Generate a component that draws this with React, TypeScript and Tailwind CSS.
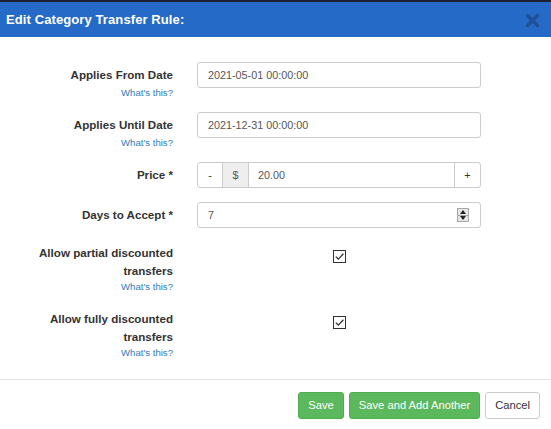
import { ReactNode } from 'react';

const Help = ({ className = '' }: { className?: string }) => (
    <div className={`text-[9.6px] leading-[12px] text-[#337ab7] ${className}`}>What's this?</div>
);

const Label = ({ children }: { children: ReactNode }) => (
    <div className="text-[11.6px] leading-[18px] font-bold text-[#333]">{children}</div>
);

const TextInput = ({ value, spinner }: { value: string; spinner?: boolean }) => (
    <div className="h-[26px] w-full border border-[#ccc] rounded-[3px] flex items-center pl-[10px] pr-[11px] text-[10.8px] text-[#555]">
        <span className="flex-1">{value}</span>
        {spinner && (
            <div className="w-[12px] h-[14px] flex flex-col border border-[#a9a9a9] bg-[#e6e6e6]">
                <div className="flex-1 flex items-center justify-center border-b border-[#a9a9a9]">
                    <div className="w-0 h-0 border-l-[3px] border-r-[3px] border-b-[4px] border-l-transparent border-r-transparent border-b-[#222]" />
                </div>
                <div className="flex-1 flex items-center justify-center">
                    <div className="w-0 h-0 border-l-[3px] border-r-[3px] border-t-[4px] border-l-transparent border-r-transparent border-t-[#222]" />
                </div>
            </div>
        )}
    </div>
);

const Checkbox = () => (
    <div className="w-[13px] h-[13px] border border-[#333] bg-white flex items-center justify-center">
        <svg width="11" height="11" viewBox="0 0 11 11">
            <path d="M1.8 5.6 L4.3 8.1 L9.4 2.8" fill="none" stroke="#333" strokeWidth="1.3" />
        </svg>
    </div>
);

const App = () => {
    return (
        <div className="w-[551px] h-[429px] bg-white overflow-hidden font-['Liberation_Sans',Arial,sans-serif]">
            <div className="h-[37px] border-t-2 border-[#1c2030] bg-[#256ac6] flex items-center justify-between pl-[6px] pr-[11px]">
                <h3 className="text-[13px] font-bold text-white tracking-[0.1px]">Edit Category Transfer Rule:</h3>
                <svg width="15" height="15" viewBox="0 0 15 15" className="mt-[1px]">
                    <path d="M2.5 2.5 L12.5 12.5 M12.5 2.5 L2.5 12.5" stroke="#1f5196" strokeWidth="3.4" strokeLinecap="round" />
                </svg>
            </div>

            <div className="pt-[25px] pb-[20px]">
                <div className="flex mb-[13px]">
                    <div className="w-[173px] text-right pt-[4px]">
                        <Label>Applies From Date</Label>
                        <Help className="mt-[3px]" />
                    </div>
                    <div className="ml-[24px] w-[284px]">
                        <TextInput value="2021-05-01 00:00:00" />
                    </div>
                </div>

                <div className="flex mb-[13px]">
                    <div className="w-[173px] text-right pt-[4px]">
                        <Label>Applies Until Date</Label>
                        <Help className="mt-[3px]" />
                    </div>
                    <div className="ml-[24px] w-[284px]">
                        <TextInput value="2021-12-31 00:00:00" />
                    </div>
                </div>

                <div className="flex mb-[14px]">
                    <div className="w-[173px] text-right pt-[4px]">
                        <Label>Price *</Label>
                    </div>
                    <div className="ml-[24px] w-[284px] h-[26px] flex border border-[#ccc] rounded-[3px] text-[10.8px]">
                        <div className="w-[24px] flex items-center justify-center text-[#333]">-</div>
                        <div className="w-[26px] flex items-center justify-center bg-[#eee] border-l border-[#ccc] text-[#555]">$</div>
                        <div className="flex-1 flex items-center pl-[9px] border-l border-[#ccc] text-[#555]">20.00</div>
                        <div className="w-[26px] flex items-center justify-center border-l border-[#ccc] text-[#333]">+</div>
                    </div>
                </div>

                <div className="flex mb-[14px]">
                    <div className="w-[173px] text-right pt-[4px]">
                        <Label>Days to Accept *</Label>
                    </div>
                    <div className="ml-[24px] w-[284px]">
                        <TextInput value="7" spinner />
                    </div>
                </div>

                <div className="flex mb-[15px]">
                    <div className="w-[173px] text-right pt-[2px]">
                        <Label>Allow partial discounted<br />transfers</Label>
                        <Help className="mt-[1px]" />
                    </div>
                    <div className="ml-[24px] w-[284px] flex justify-center pt-[8px]">
                        <Checkbox />
                    </div>
                </div>

                <div className="flex">
                    <div className="w-[173px] text-right pt-[2px]">
                        <Label>Allow fully discounted<br />transfers</Label>
                        <Help className="mt-[1px]" />
                    </div>
                    <div className="ml-[24px] w-[284px] flex justify-center pt-[8px]">
                        <Checkbox />
                    </div>
                </div>
            </div>

            <div className="border-t border-[#e5e5e5] flex justify-end gap-[5px] pt-[12px] pr-[11px]">
                <button className="h-[27px] px-[9px] rounded-[3px] border border-[#4cae4c] bg-[#5cb85c] text-white text-[11.2px]">Save</button>
                <button className="h-[27px] px-[9px] rounded-[3px] border border-[#4cae4c] bg-[#5cb85c] text-white text-[11.2px]">Save and Add Another</button>
                <button className="h-[27px] px-[9px] rounded-[3px] border border-[#ccc] bg-white text-[#333] text-[11.2px]">Cancel</button>
            </div>
        </div>
    );
};

export default App;
